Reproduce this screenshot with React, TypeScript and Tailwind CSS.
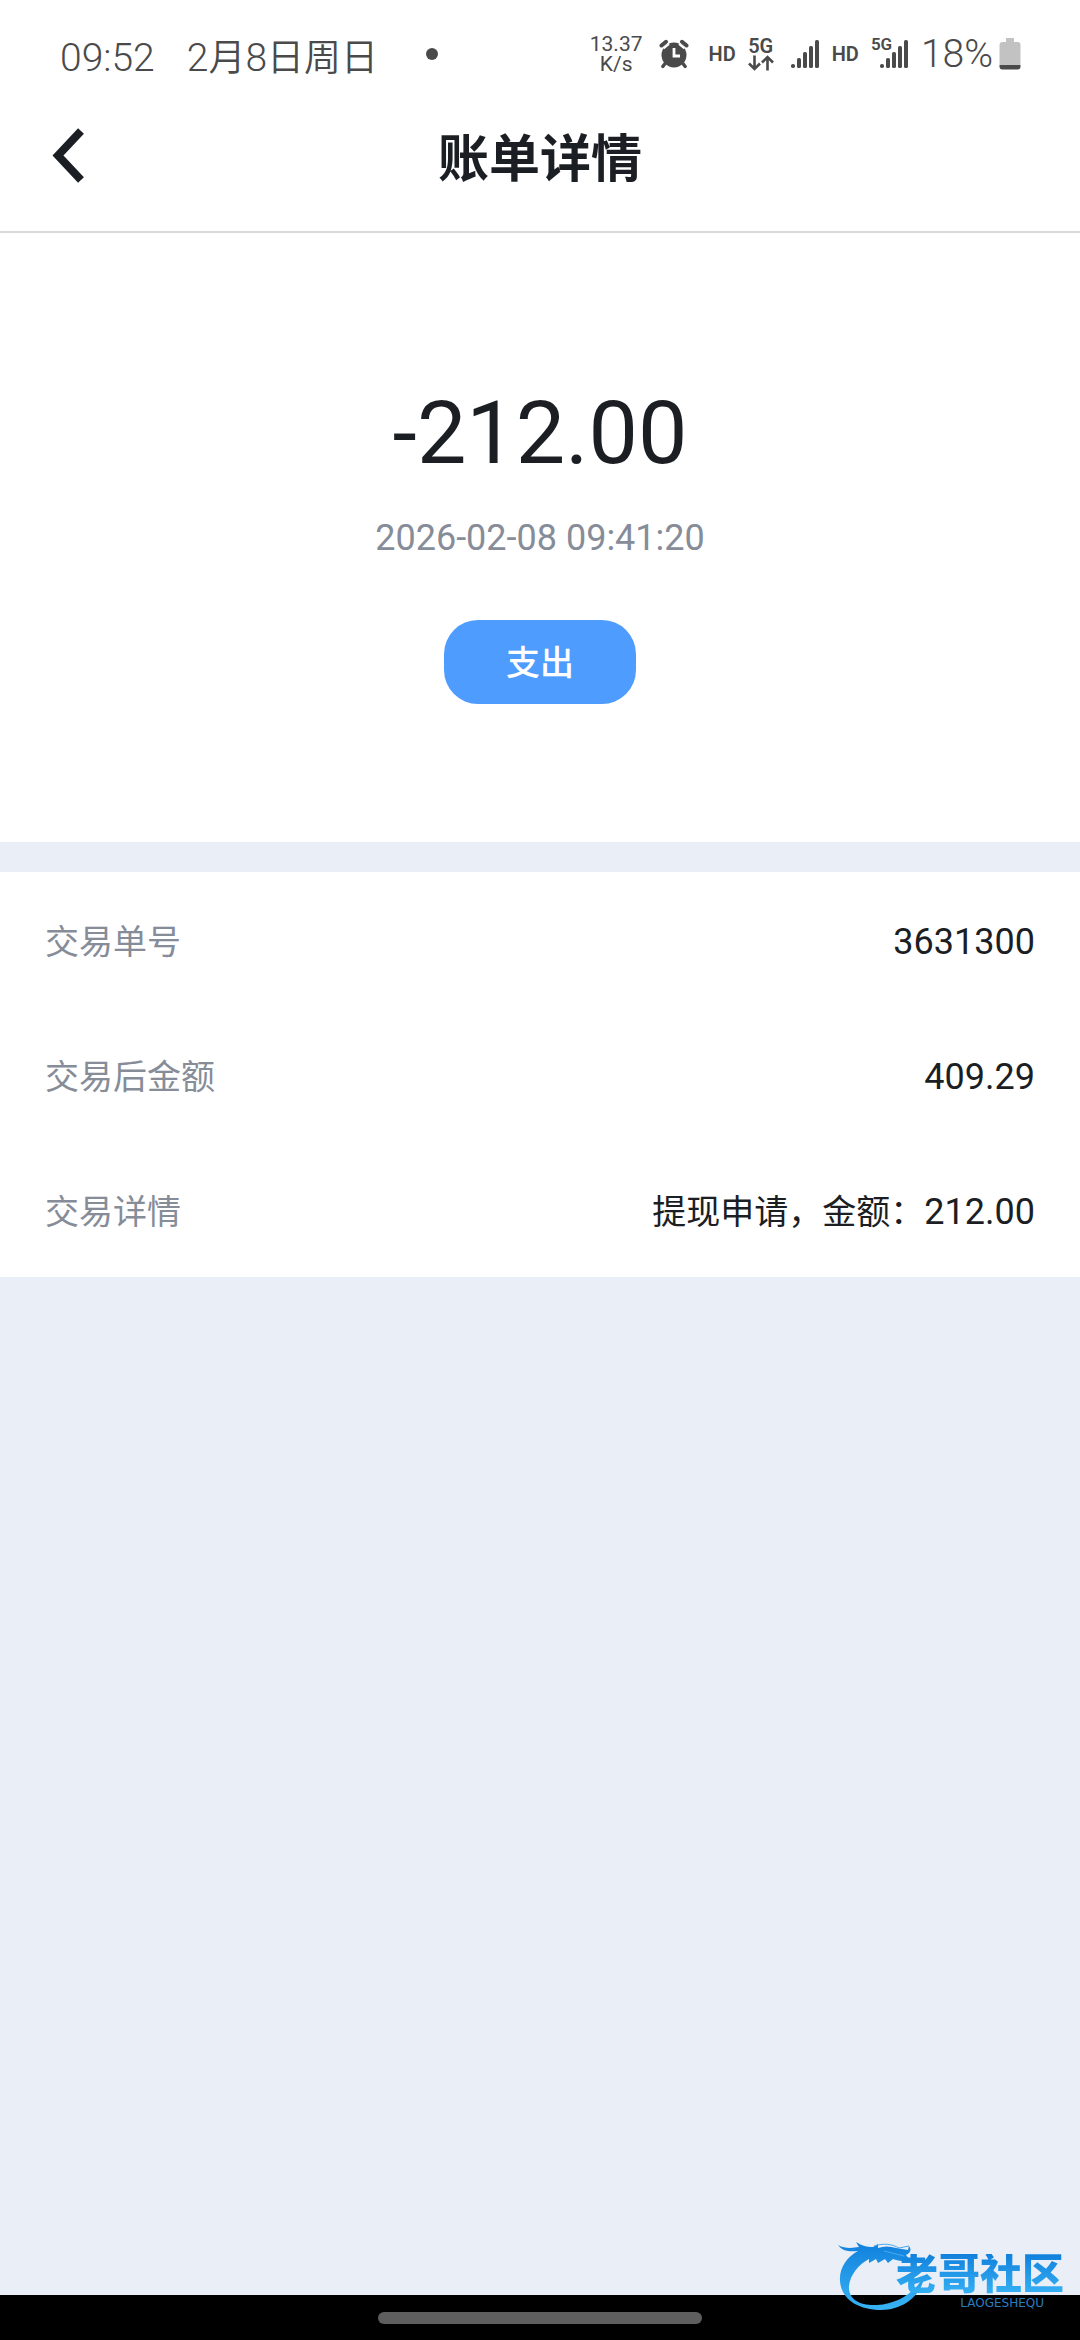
import React from "react";

const details = [
  { label: "交易单号", note: "", value: "3631300" },
  { label: "交易后金额", note: "", value: "409.29" },
  { label: "交易详情", note: "提现申请，金额：", value: "212.00" },
];

function AlarmIcon() {
  return (
    <svg width="30" height="30" viewBox="0 0 30 30" fill="none" aria-hidden="true">
      <circle cx="15" cy="16" r="12.5" fill="#4a4a4a" />
      <path d="M2.500 6.500 7 2.800M27.500 6.500 23 2.800" stroke="#4a4a4a" strokeWidth="4" strokeLinecap="round" />
      <path d="M6.500 24 3.800 27.500M23.500 24l2.700 3.500" stroke="#4a4a4a" strokeWidth="3.4" strokeLinecap="round" />
      <path d="M4.500 9.500 10 5M25.500 9.500 20 5" stroke="#fff" strokeWidth="2" />
      <path d="M15 9v8h6" stroke="#fff" strokeWidth="2.8" />
    </svg>
  );
}

function SignalIcon() {
  return (
    <svg width="30" height="30" viewBox="0 0 30 30" aria-hidden="true" fill="#4a4a4a">
      <rect x="1" y="25" width="4" height="4" rx="1.8" />
      <rect x="7" y="19" width="4" height="10" rx="1.6" />
      <rect x="13" y="13" width="4" height="16" rx="1.6" />
      <rect x="19" y="7" width="4" height="22" rx="1.6" />
      <rect x="25" y="1" width="4" height="28" rx="1.6" />
    </svg>
  );
}

function DataArrows() {
  return (
    <svg width="26" height="16" viewBox="0 0 26 16" fill="none" stroke="#4a4a4a" strokeWidth="2.6" aria-hidden="true">
      <path d="M6.500 0.500v13.500M1 8.500l5.500 5.500 5.500-5.500M19.500 15.500V2M14 7.500 19.500 2 25 7.500" />
    </svg>
  );
}

function BatteryIcon() {
  return (
    <svg width="22" height="32" viewBox="0 0 22 32" aria-hidden="true">
      <path d="M7 0h8v4h3.500a3 3 0 0 1 3 3v20H0.500V7a3 3 0 0 1 3-3H7z" fill="#c2c2c2" />
      <path d="M0.500 27h21v1.500a3 3 0 0 1-3 3h-15a3 3 0 0 1-3-3z" fill="#4a4a4a" />
    </svg>
  );
}

function StatusBar() {
  return (
    <div className="flex h-[84px] items-center justify-between pl-[60px] pr-[59px] pt-6 text-[#4a4a4a]">
      <div className="flex items-center">
        <div className="flex items-baseline gap-8 pt-2 text-[39px] leading-[46px] font-[350]">
          <span>09:52</span>
          <span>
            2<span className="text-[37px]">月</span>8<span className="text-[37px]">日周日</span>
          </span>
        </div>
        <span className="ml-12 size-3 rounded-full bg-[#4a4a4a]" />
      </div>
      <div className="flex items-center">
        <div className="text-center text-[21px] leading-5">
          <div>13.37</div>
          <div>K/s</div>
        </div>
        <div className="ml-4"><AlarmIcon /></div>
        <span className="ml-5 text-[20px] leading-6 font-semibold">HD</span>
        <div className="ml-3 flex flex-col items-center">
          <span className="text-[20px] leading-[18px] font-semibold">5G</span>
          <DataArrows />
        </div>
        <div className="ml-4"><SignalIcon /></div>
        <span className="ml-3 text-[20px] leading-6 font-semibold">HD</span>
        <div className="relative ml-5">
          <SignalIcon />
          <span className="absolute -left-2 -top-1 text-[17px] leading-[18px] font-semibold">5G</span>
        </div>
        <span className="ml-3 text-[39px] leading-[46px] font-[350]">18%</span>
        <div className="ml-1.5"><BatteryIcon /></div>
      </div>
    </div>
  );
}

function Watermark() {
  return (
    <div className="absolute bottom-6 right-4 flex items-center" aria-label="老哥社区">
      <svg width="94" height="76" viewBox="0 0 94 76" className="-mr-9" aria-hidden="true">
        <defs>
          <linearGradient id="dragon" x1="0" y1="0" x2="0" y2="1">
            <stop offset="0" stopColor="#1180dc" />
            <stop offset="1" stopColor="#37b3f5" />
          </linearGradient>
        </defs>
        <path
          fill="url(#dragon)"
          d="M0 5c7 4 15 3 21 2l-3-5c6 4 11 5 17 5l5-3v4c6-2 12-2 18 0l12 2 1-4c3 4 1 7-3 9l3 4c-5 3-11 2-16 0l-5 4-3-4-7 4-2-4-7 4v-4c-10 5-19 16-20 27-1 14 12 20 28 19 20-1 38-12 47-29-1 17-19 34-43 34C20 70 3 59 2 41 1 28 9 17 20 11 11 12 4 11 0 5z"
        />
        <path d="M36 6c10-3 18-2 25 2l10-2M46 11l20 5" stroke="#4aa8ee" strokeWidth="1" fill="none" />
      </svg>
      <div className="relative flex flex-col items-end pt-2">
        <span className="bg-linear-to-b from-[#1180dc] to-[#37b3f5] bg-clip-text text-[42px] leading-[42px] font-black text-transparent">老哥社区</span>
        <span className="mr-5 font-['DejaVu_Sans'] text-[12px] leading-[14px] text-[#2a7cc0]">LAOGESHEQU</span>
      </div>
    </div>
  );
}

export default function App() {
  return (
    <div className="relative flex min-h-screen flex-col bg-[#e9eef7] font-[Roboto,'Noto_Sans_CJK_SC',sans-serif] text-[#1b1e23]">
      <div className="border-b-2 border-[#d8dadd] bg-white">
        <StatusBar />
        <header className="grid h-[147px] grid-cols-[1fr_auto_1fr] items-center px-12">
          <button type="button" aria-label="返回" className="justify-self-start">
            <svg width="40" height="60" viewBox="0 0 40 60" fill="none" aria-hidden="true">
              <path d="M33 3 10 27.500 33 52" stroke="#1b1e23" strokeWidth="8" />
            </svg>
          </button>
          <h1 className="pt-1 text-[51px] leading-[60px] font-bold">账单详情</h1>
        </header>
      </div>

      <main>
        <section className="flex flex-col items-center bg-white pb-[138px] pt-[150px]">
          <p className="text-[88px] leading-[100px]">-212.00</p>
          <time className="mt-8 text-[36px] leading-[46px] text-[#868c98]">2026-02-08 09:41:20</time>
          <button type="button" className="mt-[59px] h-[84px] w-48 rounded-[34px] bg-[#4f9cff] pt-0.5 text-[34px] font-medium text-white">
            支出
          </button>
        </section>

        <dl className="mt-[30px] bg-white px-[45px]">
          {details.map((row) => (
            <div key={row.label} className="flex h-[135px] items-center justify-between pt-1">
              <dt className="text-[34px] leading-[50px] text-[#868c98]">{row.label}</dt>
              <dd className="text-[36px] leading-[50px]">
                <span className="text-[34px]">{row.note}</span>
                {row.value}
              </dd>
            </div>
          ))}
        </dl>
      </main>

      <footer className="mt-auto flex h-[45px] items-center justify-center bg-black">
        <span className="h-3 w-[30%] rounded-full bg-[#5e5e5e]" />
      </footer>
      <Watermark />
    </div>
  );
}
